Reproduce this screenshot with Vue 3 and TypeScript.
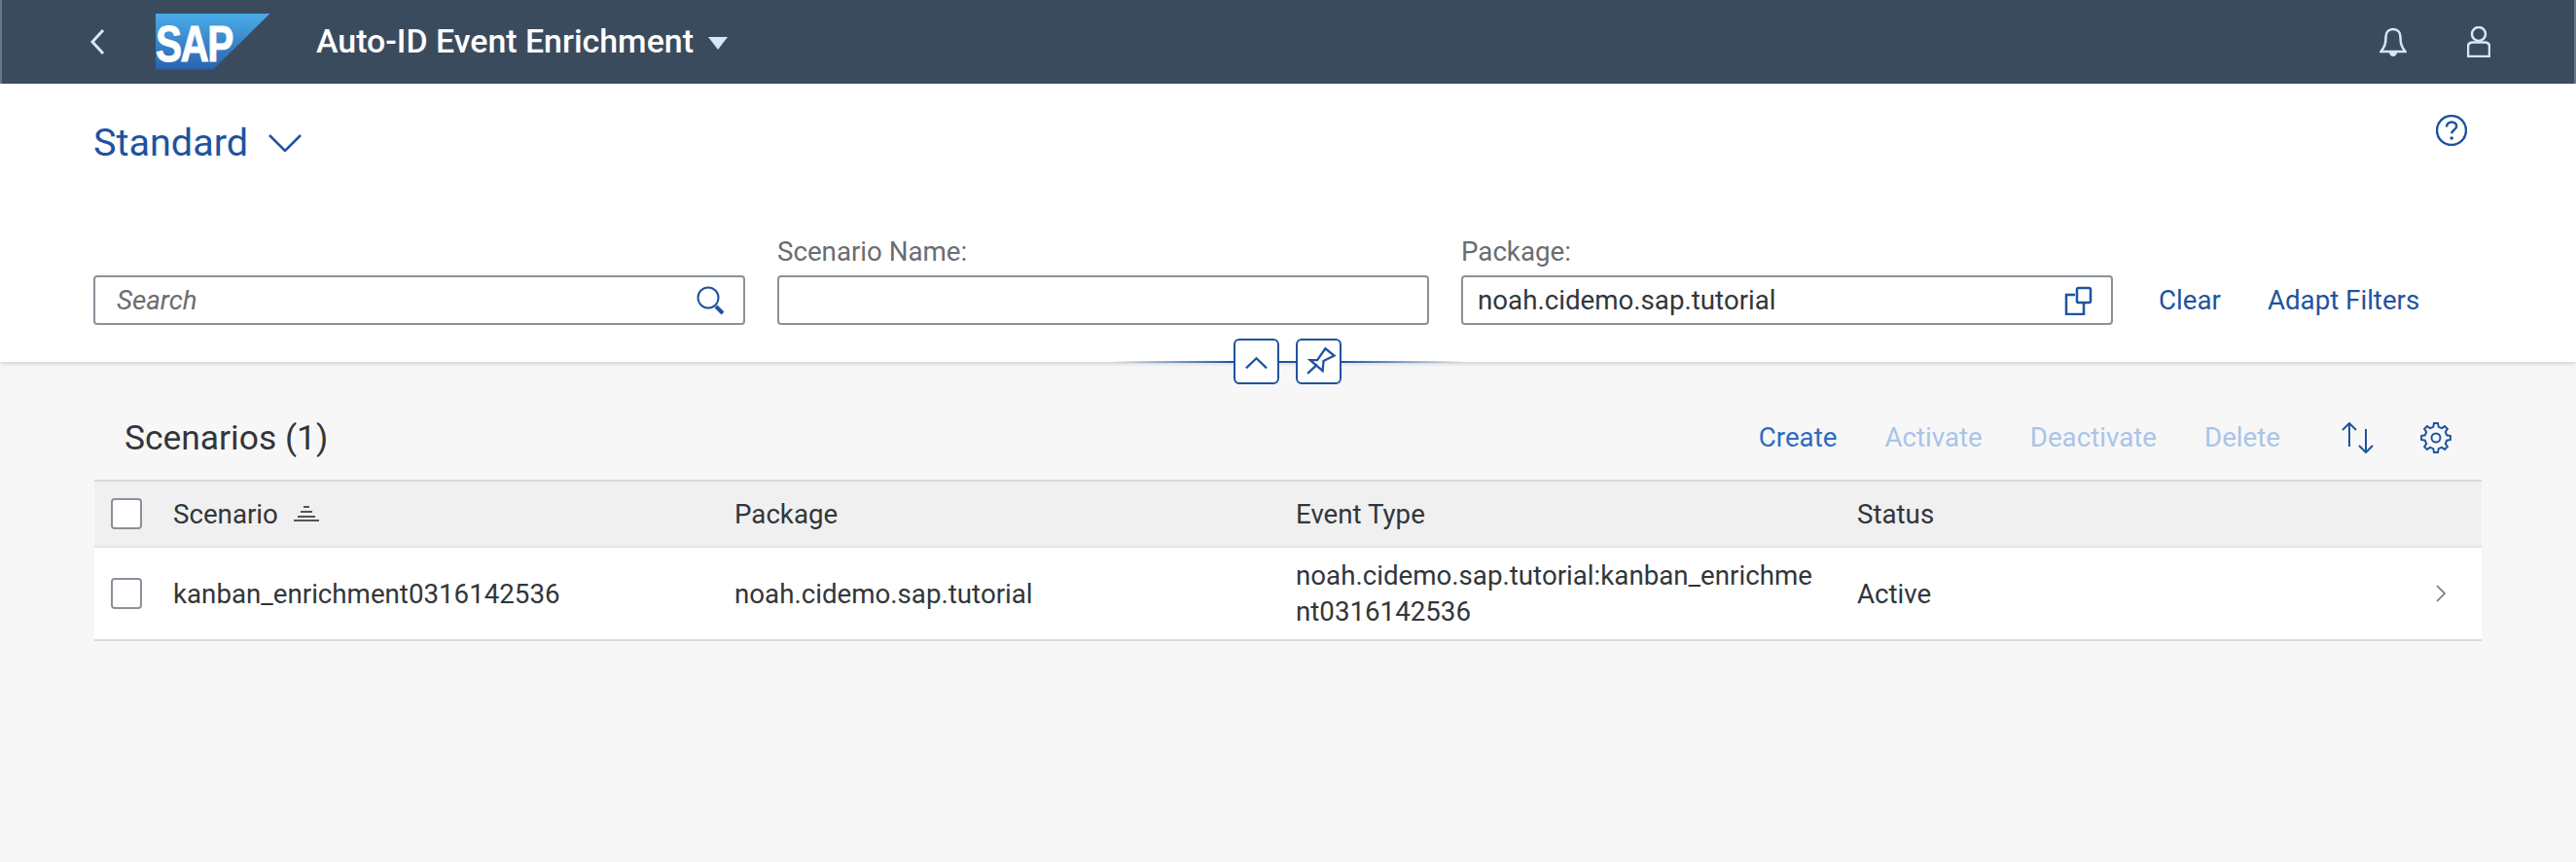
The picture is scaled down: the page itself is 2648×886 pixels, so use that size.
<template>
  <div class="page">
    <header class="shell">
      <svg class="back" viewBox="0 0 16 28"><path d="M14 2 3 14l11 12" /></svg>
      <div class="logo"><span>SAP</span></div>
      <div class="app-title">Auto-ID Event Enrichment</div>
      <span class="caret"></span>
      <div class="shell-right">
        <svg class="bell" viewBox="0 0 28 32">
          <path d="M14 3c-5 0-7.500 3.500-7.500 8 0 7-1 9.500-5 15h25c-4-5.500-5-8-5-15 0-4.500-2.500-8-7.500-8z" />
          <path class="solid" d="M10 27h8c-.5 2.500-2 4-4 4s-3.500-1.500-4-4zM12.500 3.500a1.500 1.500 0 0 1 3 0z" />
        </svg>
        <svg class="user" viewBox="0 0 24 32">
          <circle cx="12" cy="8" r="7" />
          <path d="M1 31V21c0-3 2-4.500 5-4.500h12c3 0 5 1.500 5 4.500v10z" />
        </svg>
      </div>
    </header>

    <section class="filters">
      <div class="variant-row">
        <span class="variant">Standard</span>
        <svg class="variant-arrow" viewBox="0 0 34 18"><path d="M1 1l16 16L33 1" /></svg>
        <svg class="help" viewBox="0 0 32 32">
          <circle cx="16" cy="16" r="15" />
          <path d="M11 12.500c0-3 2.200-5 5.200-5s5 1.800 5 4.300c0 3.700-5 3.700-5 7.500" />
          <circle class="solid" cx="16.200" cy="24" r="1.800" />
        </svg>
      </div>
      <div class="filter-row">
        <div class="field">
          <div class="input">
            <span class="placeholder">Search</span>
            <svg class="input-icon" viewBox="0 0 30 30">
              <circle cx="12" cy="12" r="10.500" stroke-width="2" />
              <path class="thick" d="M20 21l7 7" />
            </svg>
          </div>
        </div>
        <div class="field">
          <label>Scenario Name:</label>
          <div class="input"></div>
        </div>
        <div class="field">
          <label>Package:</label>
          <div class="input">
            <span>noah.cidemo.sap.tutorial</span>
            <svg class="input-icon" viewBox="0 0 30 30">
              <path d="M11 9H2v20h18V17" />
              <rect x="13" y="2" width="14" height="15" rx="1.500" />
            </svg>
          </div>
        </div>
        <div class="filter-actions">
          <a>Clear</a>
          <a>Adapt Filters</a>
        </div>
      </div>
      <div class="expander">
        <span class="line left"></span>
        <button class="exp-btn">
          <svg viewBox="0 0 47 47"><path d="M12 31l11.500-11L35 31" /></svg>
        </button>
        <span class="link-line"></span>
        <button class="exp-btn">
          <svg viewBox="0 0 47 47">
            <path d="M11 37l11-10M14 22l8 0 9-13 10 8-12 6-1 11z" />
          </svg>
        </button>
        <span class="line right"></span>
      </div>
    </section>

    <main class="content">
      <div class="toolbar">
        <h2>Scenarios (1)</h2>
        <div class="toolbar-actions">
          <a class="create">Create</a>
          <a v-for="name in disabledActions" :key="name" class="disabled">{{ name }}</a>
          <svg class="sort" viewBox="0 0 34 32">
            <path d="M8 25V1M1 8l7-7 7 7M25 7v24M18 24l7 7 7-7" />
          </svg>
          <svg class="gear" viewBox="0 0 32 32">
            <path :d="gearPath" />
            <circle cx="16" cy="16" r="4.500" />
          </svg>
        </div>
      </div>

      <div class="table">
        <div class="row head">
          <div class="check-cell"><span class="check"></span></div>
          <div class="cell">
            Scenario
            <svg class="sorted" viewBox="0 0 26 16">
              <path d="M10 1h6M7 6h12M4 11h18M0 15h26" />
            </svg>
          </div>
          <div class="cell">Package</div>
          <div class="cell">Event Type</div>
          <div class="cell">Status</div>
          <div></div>
        </div>
        <div v-for="item in scenarios" :key="item.name" class="row body">
          <div class="check-cell"><span class="check"></span></div>
          <div class="cell">{{ item.name }}</div>
          <div class="cell">{{ item.pkg }}</div>
          <div class="cell wrap">{{ item.eventType }}</div>
          <div class="cell">{{ item.status }}</div>
          <div class="nav">
            <svg viewBox="0 0 12 20"><path d="M2 2l8 8-8 8" /></svg>
          </div>
        </div>
      </div>
    </main>
  </div>
</template>

<script setup lang="ts">
const disabledActions = ['Activate', 'Deactivate', 'Delete'];

const scenarios = [
  {
    name: 'kanban_enrichment0316142536',
    pkg: 'noah.cidemo.sap.tutorial',
    eventType: 'noah.cidemo.sap.tutorial:kanban_enrichment0316142536',
    status: 'Active',
  },
];

// outline of the settings cog, 8 teeth
function buildGear(teeth: number, outer: number, inner: number) {
  const pts: string[] = [];
  const step = (Math.PI * 2) / teeth;
  for (let i = 0; i < teeth; i++) {
    const a = i * step - Math.PI / 2;
    const corners: [number, number][] = [
      [a - step * 0.3, inner],
      [a - step * 0.17, outer],
      [a + step * 0.17, outer],
      [a + step * 0.3, inner],
    ];
    for (const [ang, r] of corners) {
      pts.push(`${(16 + Math.cos(ang) * r).toFixed(1)} ${(16 + Math.sin(ang) * r).toFixed(1)}`);
    }
  }
  return `M${pts.join('L')}Z`;
}

const gearPath = buildGear(8, 15, 11.5);
</script>

<style>
html,
body {
  margin: 0;
  background: #f7f7f7;
}
</style>

<style scoped>
.page {
  width: 2648px;
  height: 886px;
  overflow: hidden;
  background: #f7f7f7;
  font-family: Roboto, "Liberation Sans", sans-serif;
  font-size: 27.7px;
  color: #32363a;
}

svg {
  display: block;
  fill: none;
  stroke-width: 2.5;
}

.shell {
  height: 86px;
  box-sizing: border-box;
  background: #3b4b5e;
  display: flex;
  align-items: center;
  padding-left: 90px;
  padding-right: 86px;
  border-left: 2px solid #6b7683;
  border-right: 2px solid #6b7683;
  color: #fff;
}

.back {
  width: 16px;
  height: 28px;
  stroke: #d1e8ff;
  stroke-width: 3;
  margin-top: -1px;
}

.logo {
  width: 118px;
  height: 58px;
  margin-left: 52px;
  margin-top: -1px;
  background: linear-gradient(#4bace9, #2763ae);
  clip-path: polygon(0 0, 100% 0, 50% 100%, 0 100%);
  color: #fff;
  font-family: "Liberation Sans", sans-serif;
  font-weight: 700;
  font-size: 52px;
  line-height: 58px;
  letter-spacing: -2px;
  box-sizing: border-box;
}

.logo span {
  display: block;
  padding-top: 2px;
  transform: scaleX(0.78);
  transform-origin: left center;
  -webkit-text-stroke: 1px #fff;
}

.app-title {
  margin-left: 47px;
  margin-top: -2px;
  font-size: 33.9px;
  font-weight: 500;
}

.caret {
  margin-left: 15px;
  margin-top: 2px;
  width: 0;
  height: 0;
  border-left: 10px solid transparent;
  border-right: 10px solid transparent;
  border-top: 13px solid #d1e8ff;
}

.shell-right {
  margin-left: auto;
  display: flex;
  align-items: center;
  gap: 62px;
}

.bell {
  width: 28px;
  height: 32px;
  stroke: #d1e8ff;
}

.bell .solid {
  fill: #d1e8ff;
  stroke: none;
}

.user {
  width: 24px;
  height: 32px;
  stroke: #d1e8ff;
}

.filters {
  position: relative;
  height: 286px;
  box-sizing: border-box;
  background: #fff;
  padding: 40px 112px 0 96px;
  box-shadow: 0 2px 4px rgba(0, 0, 0, 0.15);
}

.variant-row {
  display: flex;
  align-items: center;
  height: 40px;
}

.variant {
  font-size: 39.6px;
  color: #1f539f;
}

.variant-arrow {
  width: 34px;
  height: 18px;
  margin-left: 21px;
  margin-top: 2px;
  stroke: #1f539f;
}

.help {
  width: 32px;
  height: 32px;
  margin-left: auto;
  margin-top: -24px;
  stroke: #1f539f;
}

.help .solid {
  fill: #1f539f;
  stroke: none;
}

.filter-row {
  display: flex;
  align-items: flex-end;
  gap: 33px;
  margin-top: 77px;
}

.field {
  width: 670px;
}

.field label {
  display: block;
  color: #6a6d70;
  margin-bottom: 8px;
  line-height: 32px;
}

.input {
  height: 51px;
  box-sizing: border-box;
  border: 2px solid #89919a;
  border-radius: 4px;
  padding: 0 18px 0 15px;
  display: flex;
  align-items: center;
  justify-content: space-between;
}

.placeholder {
  color: #6a6d70;
  font-style: italic;
  margin-left: 7px;
}

.input-icon {
  width: 30px;
  height: 30px;
  stroke: #1f539f;
}

.input-icon .thick {
  stroke-width: 4;
}

.filter-actions {
  display: flex;
  gap: 48px;
  height: 51px;
  align-items: center;
  margin-left: 14px;
  color: #1f539f;
}

.expander {
  position: absolute;
  left: 1140px;
  top: 262px;
  display: flex;
  align-items: center;
}

.line {
  width: 128px;
  height: 2px;
}

.line.left {
  background: linear-gradient(to right, transparent, #1f539f);
}

.line.right {
  width: 128px;
  background: linear-gradient(to left, transparent, #1f539f);
}

.link-line {
  width: 17px;
  height: 2px;
  background: #1f539f;
}

.exp-btn {
  width: 47px;
  height: 47px;
  padding: 0;
  box-sizing: border-box;
  background: #fff;
  border: 2px solid #1f539f;
  border-radius: 6px;
}

.exp-btn svg {
  width: 43px;
  height: 43px;
  stroke: #1f539f;
}

.content {
  padding: 0 97px;
}

.toolbar {
  height: 121px;
  box-sizing: border-box;
  display: flex;
  align-items: center;
  justify-content: space-between;
  padding: 34px 31px 0 31px;
}

.toolbar h2 {
  margin: 0;
  font-size: 35.4px;
  font-weight: 400;
}

.toolbar-actions {
  display: flex;
  align-items: center;
  gap: 49px;
}

.create {
  color: #2a6bc4;
}

.disabled {
  color: #a9c4e8;
}

.sort {
  width: 34px;
  height: 32px;
  margin-left: 14px;
  stroke: #1f539f;
  stroke-width: 2;
}

.gear {
  width: 32px;
  height: 32px;
  margin-left: -2px;
  stroke: #1f539f;
  stroke-width: 2;
}

.table {
  border-top: 2px solid #d9d9d9;
  margin-top: 0;
}

.row {
  display: grid;
  grid-template-columns: 81px 577px 577px 577px 1fr 60px;
  align-items: center;
}

.row.head {
  height: 68px;
  background: #f0f0f0;
  border-bottom: 2px solid #e5e5e5;
  box-sizing: border-box;
}

.row.body {
  height: 96px;
  background: #fff;
  border-bottom: 2px solid #d9d9d9;
  box-sizing: border-box;
}

.check-cell {
  padding-left: 17px;
}

.check {
  display: block;
  width: 32px;
  height: 32px;
  box-sizing: border-box;
  background: #fff;
  border: 2px solid #89919a;
  border-radius: 4px;
}

.cell {
  display: flex;
  align-items: center;
  gap: 16px;
  padding-right: 14px;
}

.cell.wrap {
  display: block;
  word-break: break-all;
  line-height: 37px;
  padding-right: 39px;
}

.sorted {
  width: 26px;
  height: 16px;
  stroke: #515559;
  stroke-width: 2;
}

.nav svg {
  width: 12px;
  height: 20px;
  stroke: #6a6d70;
  stroke-width: 1.5;
  margin-left: 12px;
}
</style>
